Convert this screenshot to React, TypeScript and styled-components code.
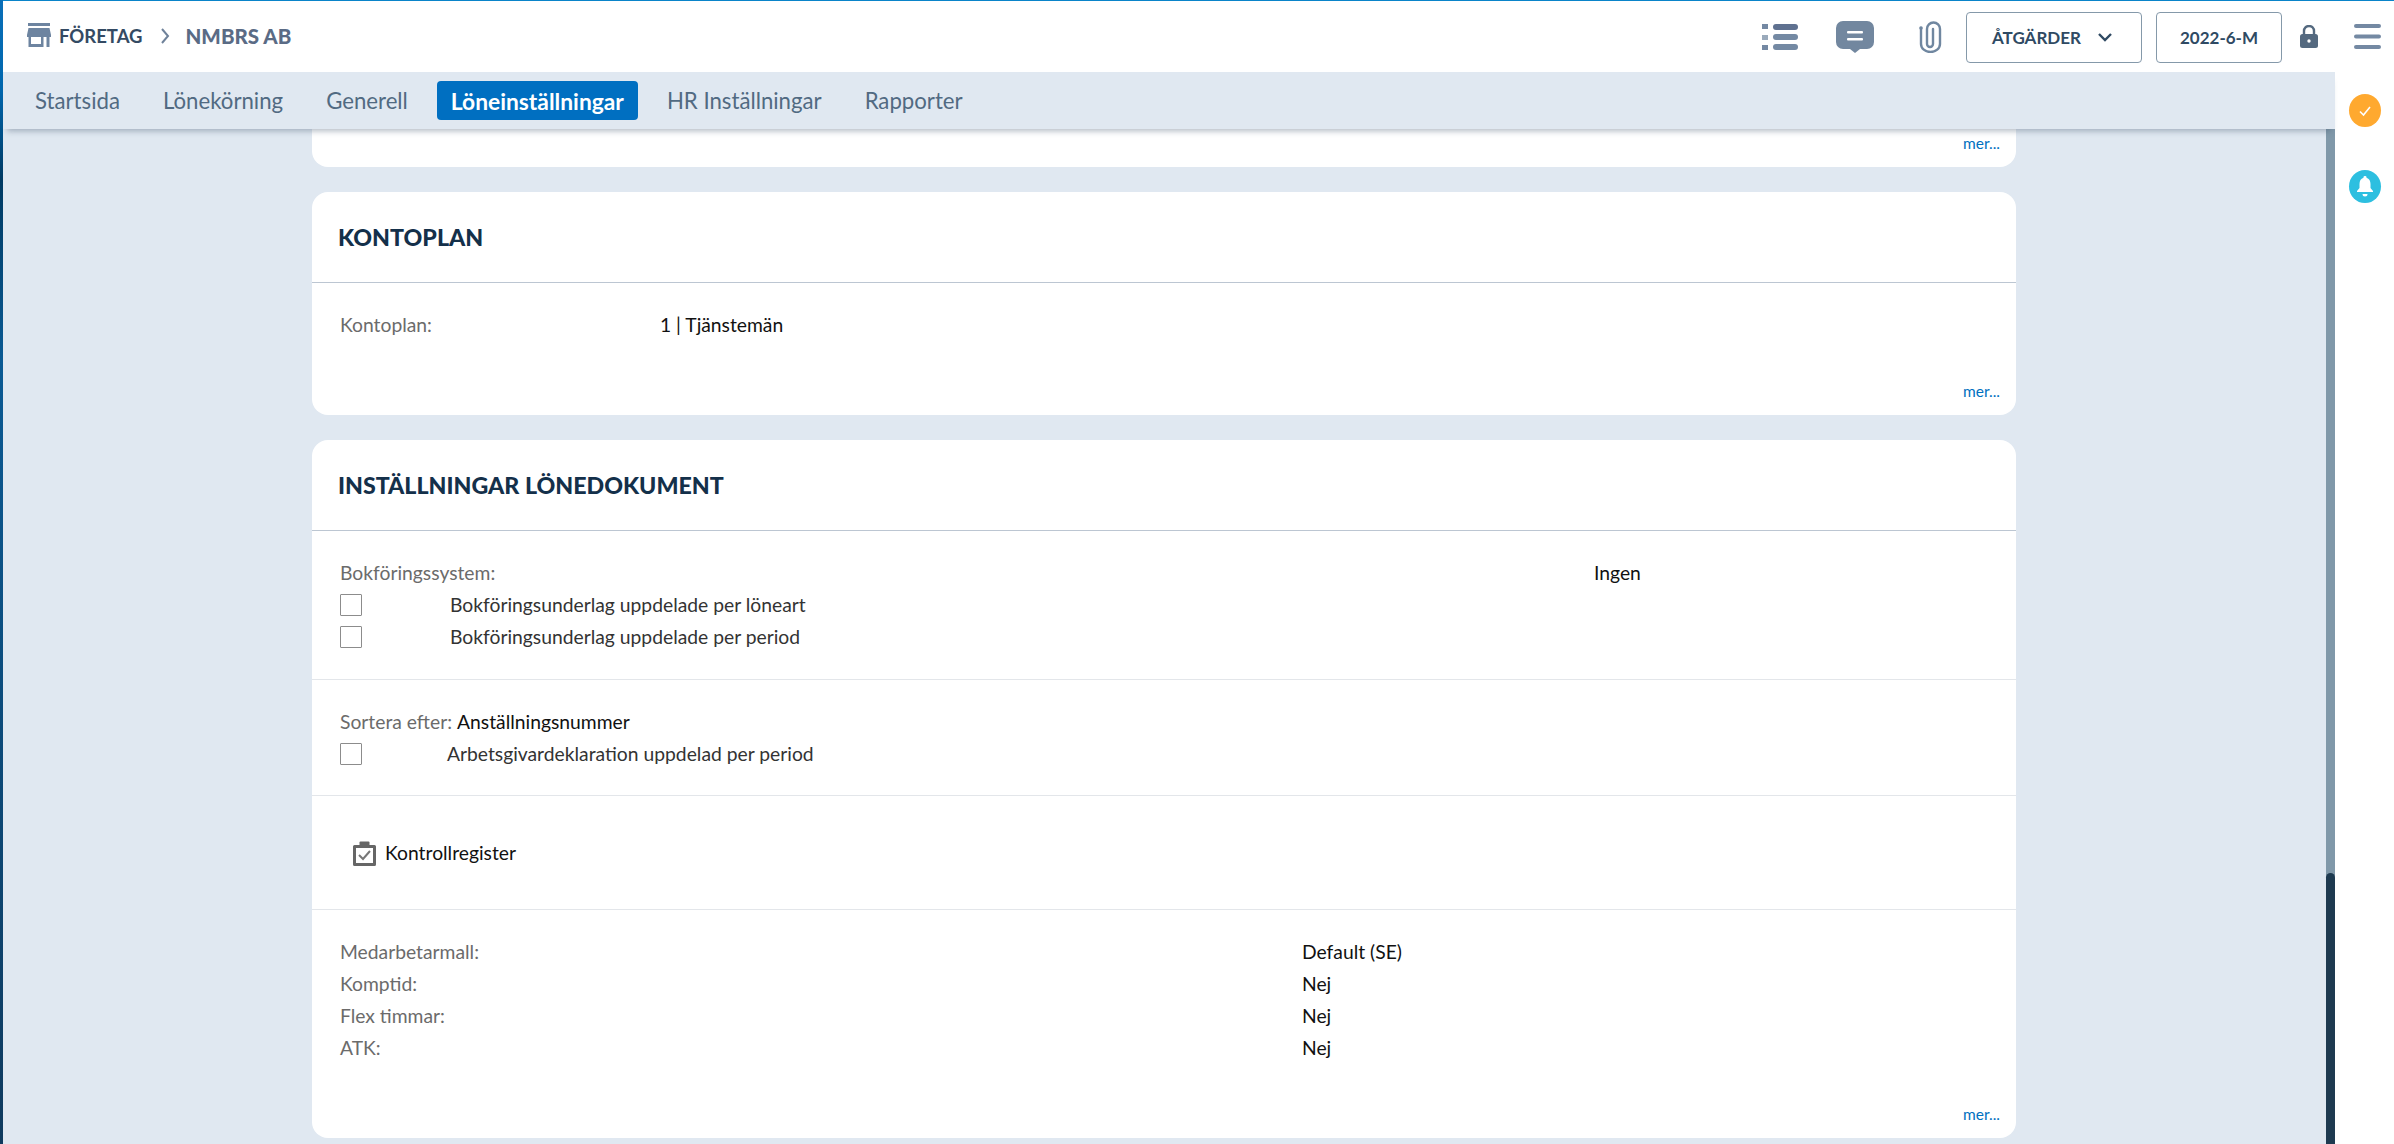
import React from "react";
import styled, { createGlobalStyle } from "styled-components";

const Global = createGlobalStyle`
  html, body { margin: 0; padding: 0; height: 100%; overflow: hidden; background: #fff; }
  body { font-family: "Lato", "Noto Sans", sans-serif; font-size: 19.3px; color: #111; }
  #root { height: 100%; }
  * { box-sizing: border-box; }
`;

const Page = styled.div`
  display: flex;
  height: 1144px;
  width: 2394px;
  overflow: hidden;
`;
const EdgeStrip = styled.div`
  width: 3px;
  flex: none;
  background: linear-gradient(#0a6fb8 0, #0067ae 90px, #003a63 180px, #0a5a94 360px, #0f3a5e 100%);
`;
const Shell = styled.div`
  flex: 1;
  display: flex;
  flex-direction: column;
  min-width: 0;
`;
const TopBar = styled.header`
  height: 72px;
  flex: none;
  display: flex;
  align-items: center;
  border-top: 1px solid #0a84c9;
  padding: 0 13px 0 24px;
`;
const Crumbs = styled.div`
  display: flex;
  align-items: center;
  flex: 1;
  margin-top: -2px;
`;
const StoreMark = styled.span`
  display: inline-flex;
  margin-top: -2px;
`;
const CrumbRoot = styled.span`
  font-weight: 700;
  font-size: 18.5px;
  color: #344a63;
  margin-left: 8px;
`;
const CrumbCompany = styled.span`
  font-weight: 900;
  font-size: 20.5px;
  color: #5a6b85;
`;
const CrumbSep = styled.span`
  display: inline-flex;
  margin: 0 16px 0 17px;
  color: #6f829a;
`;
const BarIcon = styled.span<{ $gap: number }>`
  display: inline-flex;
  margin-right: ${(p) => p.$gap}px;
`;
const OutlineButton = styled.button<{ $width: number; $shift?: number }>`
  width: ${(p) => p.$width}px;
  height: 51px;
  margin-top: 1px;
  border: 1px solid #8599aa;
  border-radius: 4px;
  background: #fff;
  color: #2f4a63;
  font-family: inherit;
  font-size: 17px;
  font-weight: 700;
  display: flex;
  align-items: center;
  justify-content: center;
  gap: 17px;
  padding: 0 ${(p) => p.$shift ?? 0}px 0 0;
`;
const Body = styled.div`
  flex: 1;
  display: flex;
  min-height: 0;
`;
const Center = styled.div`
  flex: 1;
  display: flex;
  flex-direction: column;
  min-width: 0;
`;
const Nav = styled.nav`
  height: 57px;
  flex: none;
  background: #e0e8f1;
  display: flex;
  align-items: center;
  gap: 15px;
  padding-left: 18px;
  box-shadow: 0 6px 6px -4px rgba(60, 80, 105, 0.4);
  position: relative;
  z-index: 2;
`;
const Tab = styled.a<{ $active?: boolean }>`
  height: 39px;
  padding: 0 14px;
  display: flex;
  align-items: center;
  border-radius: 4px;
  font-size: ${(p) => (p.$active ? 22.8 : 22.2)}px;
  white-space: nowrap;
  font-weight: ${(p) => (p.$active ? 700 : 400)};
  color: ${(p) => (p.$active ? "#fff" : "#516a82")};
  background: ${(p) => (p.$active ? "#006fc1" : "transparent")};
`;
const Scroller = styled.div`
  flex: 1;
  display: flex;
  background: #e0e8f1;
  min-height: 0;
  overflow: hidden;
`;
const Column = styled.main`
  flex: 1;
  padding-left: 309px;
  display: flex;
  flex-direction: column;
  gap: 25px;
`;
const ScrollTrack = styled.div`
  width: 9px;
  flex: none;
  background: #8098a9;
  display: flex;
  flex-direction: column;
  justify-content: flex-end;
`;
const ScrollThumb = styled.div`
  height: 271px;
  background: #1e3a50;
  border-radius: 5px 5px 0 0;
`;
const Card = styled.section<{ $height: number; $clipped?: boolean }>`
  width: 1704px;
  height: ${(p) => p.$height}px;
  flex: none;
  background: #fff;
  border-radius: ${(p) => (p.$clipped ? "0 0 16px 16px" : "16px")};
  display: flex;
  flex-direction: column;
`;
const CardHead = styled.div`
  height: 91px;
  flex: none;
  display: flex;
  align-items: center;
  padding: 0 0 0 26px;
  border-bottom: 1px solid #bcc6d2;
`;
const CardTitle = styled.h2`
  margin: -1px 0 0;
  font-size: 23.2px;
  font-weight: 900;
  color: #14304a;
`;
const Section = styled.div<{ $grow?: boolean; $divided?: boolean; $bottom?: number }>`
  padding: 26px 0 ${(p) => p.$bottom ?? 0}px 28px;
  border-bottom: ${(p) => (p.$divided ? "1px solid #e3e6ea" : "none")};
  flex: ${(p) => (p.$grow ? 1 : "none")};
  display: flex;
  flex-direction: column;
`;
const Row = styled.div`
  height: 32px;
  display: flex;
  align-items: center;
  white-space: nowrap;
`;
const Label = styled.span<{ $w?: number }>`
  width: ${(p) => (p.$w ? `${p.$w}px` : "auto")};
  flex: none;
  color: #6b6b6b;
  padding-bottom: 2px;
`;
const Value = styled.span<{ $gap?: number }>`
  color: #111;
  margin-left: ${(p) => p.$gap ?? 0}px;
  padding-bottom: 2px;
`;
const Check = styled.span`
  width: 22px;
  height: 22px;
  flex: none;
  border: 1.5px solid #8c8c8c;
  border-radius: 1px;
`;
const CheckLabel = styled.span<{ $x: number }>`
  margin-left: ${(p) => p.$x}px;
  color: #333;
  padding-bottom: 2px;
`;
const Action = styled.div`
  height: 114px;
  flex: none;
  border-bottom: 1px solid #e3e6ea;
  display: flex;
  align-items: center;
  padding: 2px 0 0 41px;
  gap: 9px;
`;
const More = styled.a`
  margin-top: auto;
  align-self: flex-end;
  padding: 0 16px 15px 0;
  font-size: 15.5px;
  line-height: 18px;
  color: #0070c0;
`;
const Side = styled.aside`
  width: 59px;
  flex: none;
  background: #fff;
  display: flex;
  flex-direction: column;
  align-items: center;
  padding: 22px 0 0 1px;
  gap: 43px;
`;
const Dot = styled.span<{ $c: string }>`
  width: 32px;
  height: 33px;
  border-radius: 50%;
  background: ${(p) => p.$c};
  display: flex;
  align-items: center;
  justify-content: center;
`;

const Store = () => (
  <svg width="24" height="24" viewBox="0 0 24 24" fill="#6d84a0">
    <rect x="1" y="0" width="22" height="3" />
    <path d="M1.5 5h21l1.5 7v2H0v-2z" />
    <path d="M1.5 14h2.500v7h10v-7h2.500v10H1.500z" />
    <rect x="19.5" y="14" width="3" height="10" />
  </svg>
);
const Chevron = () => (
  <svg width="10" height="16" viewBox="0 0 10 16" fill="none" stroke="currentColor" strokeWidth="2">
    <path d="M2 1l6 7-6 7" />
  </svg>
);
const ListIcon = () => (
  <svg width="36" height="26" viewBox="0 0 36 26" fill="#7489a3">
    <rect x="0" y="0" width="6" height="5" fill="#7489a3" />
    <rect x="11" y="0" width="25" height="6" rx="3" fill="#5f7190" />
    <rect x="0" y="11" width="6" height="5" fill="#9aaabb" />
    <rect x="11" y="10" width="25" height="6" rx="3" />
    <rect x="0" y="21" width="6" height="5" />
    <rect x="11" y="20" width="25" height="6" rx="3" />
  </svg>
);
const ChatIcon = () => (
  <svg width="38" height="32" viewBox="0 0 38 32">
    <path d="M7 0h24a7 7 0 0 1 7 7v14a7 7 0 0 1-7 7h-7l-5 4-5-4H7a7 7 0 0 1-7-7V7a7 7 0 0 1 7-7z" fill="#72879f" />
    <rect x="11" y="10" width="16" height="2.5" rx="1" fill="#fff" />
    <rect x="11" y="17" width="16" height="2.5" rx="1" fill="#fff" />
  </svg>
);
const ClipIcon = () => (
  <svg width="23" height="32" viewBox="0 0 23 32" fill="none" stroke="#7087a0" strokeWidth="2.4" strokeLinecap="round">
    <path d="M2 7v16a9.500 8 0 0 0 19 0V8a6.500 6.500 0 0 0-13 0v15a3 3 0 0 0 6 0V8" />
    <circle cx="2" cy="7" r="1.800" fill="#7087a0" stroke="none" />
  </svg>
);
const DownIcon = () => (
  <svg width="14" height="9" viewBox="0 0 14 9" fill="none" stroke="#2f4a63" strokeWidth="2.4">
    <path d="M1 1l6 6 6-6" />
  </svg>
);
const LockIcon = () => (
  <svg width="18" height="23" viewBox="0 0 18 23">
    <path d="M4 10V6a5 5 0 0 1 10 0v4" fill="none" stroke="#54697f" strokeWidth="2.4" />
    <rect x="0" y="9" width="18" height="14" rx="2.500" fill="#54697f" />
    <circle cx="9" cy="16" r="1.700" fill="#fff" />
  </svg>
);
const BurgerIcon = () => (
  <svg width="27" height="25" viewBox="0 0 27 25" fill="#7489a3">
    <rect width="27" height="4" rx="2" />
    <rect y="10.5" width="27" height="4" rx="2" />
    <rect y="21" width="27" height="4" rx="2" />
  </svg>
);
const ClipboardCheck = () => (
  <svg width="23" height="25" viewBox="0 0 23 25">
    <path d="M1.500 5.500h20v18h-20z" fill="none" stroke="#666" strokeWidth="3" strokeLinejoin="round" />
    <rect x="6.500" y="0.500" width="10" height="6" rx="1" fill="#666" />
    <path d="M6 14l4 4 7-8" fill="none" stroke="#777" strokeWidth="2" />
  </svg>
);
const TickIcon = () => (
  <svg width="14" height="12" viewBox="0 0 14 12" fill="none" stroke="#fff" strokeWidth="1.600">
    <path d="M2 6.500l3.500 3.500L12 2" />
  </svg>
);
const BellIcon = () => (
  <svg width="16" height="21" viewBox="0 0 16 21" fill="#fff">
    <path d="M8 0a1.500 1.500 0 0 1 1.500 1.700C12.300 2.500 13.500 5 13.500 8v4l2.500 3v1H0v-1l2.500-3V8c0-3 1.200-5.500 4-6.300A1.500 1.500 0 0 1 8 0z" />
    <path d="M5.500 18h5a2.500 2.500 0 0 1-5 0z" />
  </svg>
);

const tabs = [
  { t: "Startsida" },
  { t: "Lönekörning" },
  { t: "Generell" },
  { t: "Löneinställningar", a: true },
  { t: "HR Inställningar" },
  { t: "Rapporter" },
];

export default function App() {
  return (
    <Page>
      <Global />
      <EdgeStrip />
      <Shell>
        <TopBar>
          <Crumbs>
            <StoreMark><Store /></StoreMark>
            <CrumbRoot>FÖRETAG</CrumbRoot>
            <CrumbSep>
              <Chevron />
            </CrumbSep>
            <CrumbCompany>NMBRS AB</CrumbCompany>
          </Crumbs>
          <BarIcon $gap={38}><ListIcon /></BarIcon>
          <BarIcon $gap={45}><ChatIcon /></BarIcon>
          <BarIcon $gap={24}><ClipIcon /></BarIcon>
          <BarIcon $gap={14}>
            <OutlineButton $width={176} $shift={4}>ÅTGÄRDER <DownIcon /></OutlineButton>
          </BarIcon>
          <BarIcon $gap={18}>
            <OutlineButton $width={126}>2022-6-M</OutlineButton>
          </BarIcon>
          <BarIcon $gap={36}><LockIcon /></BarIcon>
          <BurgerIcon />
        </TopBar>
        <Body>
          <Center>
            <Nav>
              {tabs.map((x) => (
                <Tab key={x.t} $active={x.a}>{x.t}</Tab>
              ))}
            </Nav>
            <Scroller>
              <Column>
                <Card $height={38} $clipped>
                  <More>mer...</More>
                </Card>
                <Card $height={223}>
                  <CardHead><CardTitle>KONTOPLAN</CardTitle></CardHead>
                  <Section $grow>
                    <Row>
                      <Label $w={320}>Kontoplan:</Label>
                      <Value>1 | Tjänstemän</Value>
                    </Row>
                    <More>mer...</More>
                  </Section>
                </Card>
                <Card $height={698}>
                  <CardHead><CardTitle>INSTÄLLNINGAR LÖNEDOKUMENT</CardTitle></CardHead>
                  <Section $divided $bottom={26}>
                    <Row>
                      <Label $w={1254}>Bokföringssystem:</Label>
                      <Value>Ingen</Value>
                    </Row>
                    <Row>
                      <Check />
                      <CheckLabel $x={88}>Bokföringsunderlag uppdelade per löneart</CheckLabel>
                    </Row>
                    <Row>
                      <Check />
                      <CheckLabel $x={88}>Bokföringsunderlag uppdelade per period</CheckLabel>
                    </Row>
                  </Section>
                  <Section $divided $bottom={25}>
                    <Row>
                      <Label>Sortera efter:</Label>
                      <Value $gap={5}>Anställningsnummer</Value>
                    </Row>
                    <Row>
                      <Check />
                      <CheckLabel $x={85}>Arbetsgivardeklaration uppdelad per period</CheckLabel>
                    </Row>
                  </Section>
                  <Action>
                    <ClipboardCheck />
                    <Value>Kontrollregister</Value>
                  </Action>
                  <Section $grow>
                    <Row><Label $w={962}>Medarbetarmall:</Label><Value>Default (SE)</Value></Row>
                    <Row><Label $w={962}>Komptid:</Label><Value>Nej</Value></Row>
                    <Row><Label $w={962}>Flex timmar:</Label><Value>Nej</Value></Row>
                    <Row><Label $w={962}>ATK:</Label><Value>Nej</Value></Row>
                    <More>mer...</More>
                  </Section>
                </Card>
              </Column>
              <ScrollTrack><ScrollThumb /></ScrollTrack>
            </Scroller>
          </Center>
          <Side>
            <Dot $c="#ffa92f"><TickIcon /></Dot>
            <Dot $c="#2dbfe0"><BellIcon /></Dot>
          </Side>
        </Body>
      </Shell>
    </Page>
  );
}
